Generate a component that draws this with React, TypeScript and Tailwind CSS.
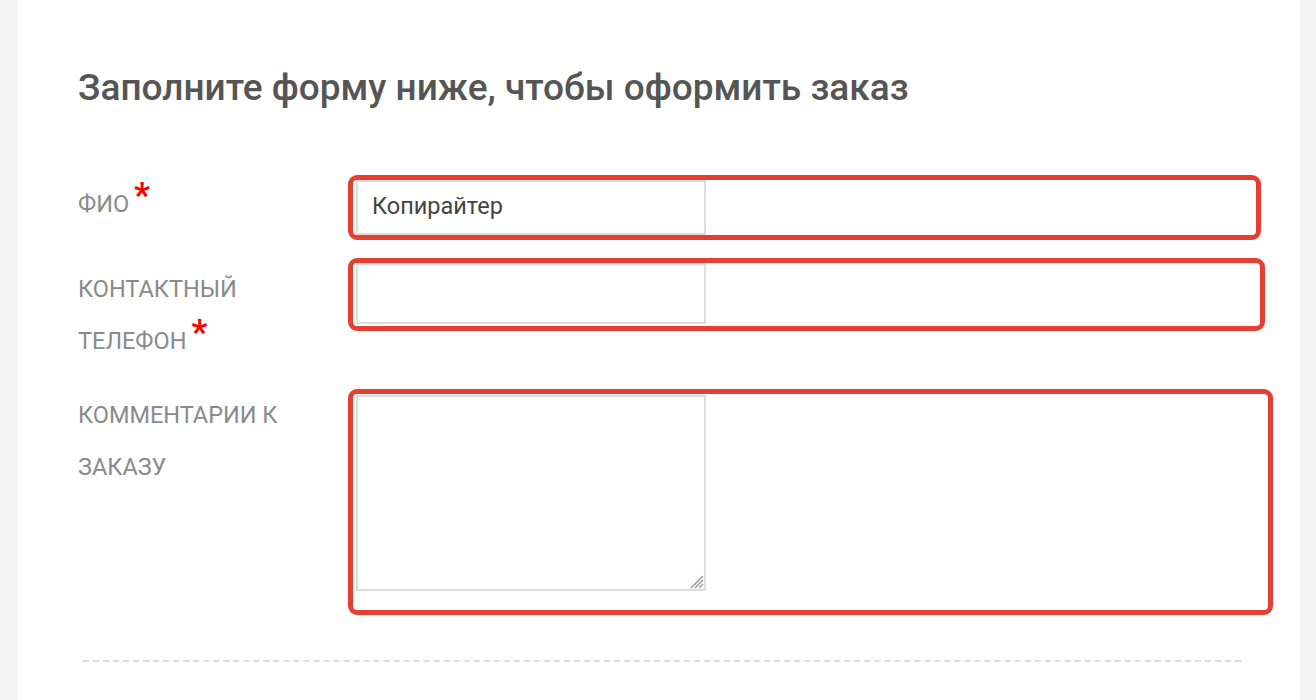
import React from "react";

const Star = () => (
    <span className="relative top-[-5px] ml-[5px] text-[35px] font-bold leading-none text-[#ff0000]">*</span>
);

// safari-style resize grip drawn over the textarea corner
const Grip = () => (
    <svg className="absolute right-[2px] bottom-[2px]" width="18" height="18" viewBox="0 0 18 18">
        <path d="M17 5L5 17M17 9L9 17M17 13L13 17" stroke="#9a9a9a" strokeWidth="1.5" />
    </svg>
);

export default function App() {
    return (
        <div className="min-h-[700px] bg-[#f3f3f3] font-['Roboto',sans-serif]">
            <div className="ml-[18px] w-[1282px] min-h-[700px] bg-white pt-[64px] pl-[60px] pr-[59px]">
                <h1 className="text-[37px] leading-[48px] font-medium text-[#555]">
                    Заполните форму ниже, чтобы оформить заказ
                </h1>

                <div className="mt-[63px] grid grid-cols-[270px_1fr]">
                    <div className="pt-[3px] text-[23.5px] leading-[52px] text-[#8a8a8a] uppercase">
                        ФИО<Star />
                    </div>
                    <div className="w-[913px] h-[65px] border-[5px] border-[#e53e33] rounded-[9px] pl-[3px]">
                        <input
                            className="w-[350px] h-[55px] border-2 border-[#ddd] px-[14px] pb-[3px] text-[23.5px] text-[#444] outline-none"
                            defaultValue="Копирайтер"
                        />
                    </div>

                    <div className="mt-[23px] text-[23.5px] leading-[52px] text-[#8a8a8a] uppercase">
                        Контактный<br />телефон<Star />
                    </div>
                    <div className="mt-[18px] w-[917px] h-[73px] border-[5px] border-[#e53e33] rounded-[9px] pl-[3px]">
                        <input className="w-[350px] h-[61px] border-2 border-[#ddd] outline-none" />
                    </div>

                    <div className="mt-[22px] text-[23.5px] leading-[52px] text-[#8a8a8a] uppercase">
                        Комментарии к<br />заказу
                    </div>
                    <div className="mt-[22px] w-[925px] h-[226px] border-[5px] border-[#e53e33] rounded-[9px] pl-[3px] pt-[1px]">
                        <div className="relative w-[350px] h-[196px]">
                            <textarea className="block w-full h-full border-2 border-[#ddd] outline-none resize-none" />
                            <Grip />
                        </div>
                    </div>
                </div>

                <div className="mt-[45px] ml-[5px] w-[1158px] border-t-2 border-dashed border-[#ddd]" />
            </div>
        </div>
    );
}
